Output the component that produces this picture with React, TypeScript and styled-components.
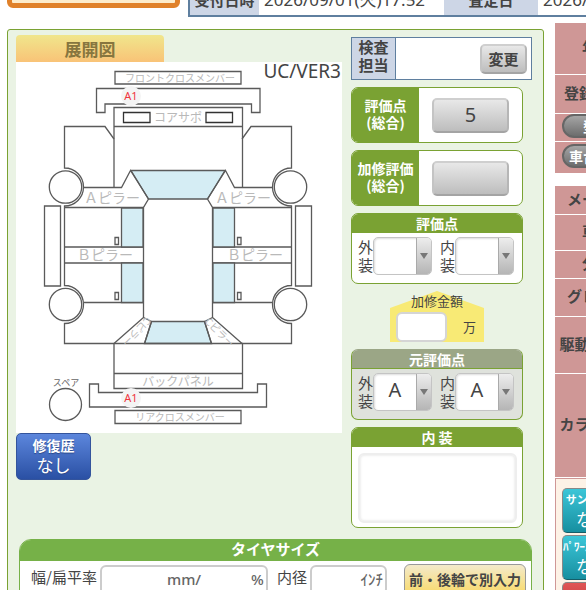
import React from 'react';
import styled, { createGlobalStyle, css } from 'styled-components';

const GREEN = '#7aa233';
const BLUE = '#5f7f9f';
const INK = '#444444';

const GlobalStyle = createGlobalStyle`
  * { box-sizing: border-box; }
  body {
    margin: 0;
    background: #fff;
    color: ${INK};
    font-family: 'Noto Sans CJK JP', 'Noto Sans', sans-serif;
    font-size: 15px;
    line-height: 18px;
  }
  button, input, select, textarea { font: inherit; color: inherit; margin: 0; }
`;

const Page = styled.div`
  height: 100vh;
  overflow: hidden;
  display: flex;
  flex-direction: column;
`;

/* ---------- header strip ---------- */

const TopBar = styled.header`
  flex: none;
  display: flex;
  align-items: flex-end;
  gap: 8px;
  height: 17px;
  padding-left: 7px;
  overflow: hidden;
`;

const Notice = styled.div`
  flex: none;
  width: 173px;
  height: 32px;
  margin-bottom: 9px;
  border: 5px solid #e0812a;
  border-radius: 6px;
  background: #fdeccb;
`;

const Dates = styled.dl`
  flex: 1;
  min-width: 0;
  display: flex;
  margin: 0;
  height: 36px;
  border: 2px solid ${BLUE};
  border-right: 0;
  white-space: nowrap;
  line-height: 34px;
`;

const DateLabel = styled.dt<{ $wide?: boolean }>`
  flex: 0 0 ${p => (p.$wide ? 94 : 69)}px;
  background: #cdd6e6;
  font-weight: 700;
  text-align: center;
`;

const DateValue = styled.dd<{ $grow?: boolean }>`
  flex: ${p => (p.$grow ? '1 0 auto' : '0 0 185px')};
  margin: 0;
  padding-left: 5px;
  font-family: 'Noto Sans', 'Noto Sans CJK JP', sans-serif;
  font-size: 17px;
`;

/* ---------- page columns ---------- */

const Main = styled.main`
  flex: 1;
  display: flex;
  align-items: flex-start;
  gap: 11px;
  padding: 6px 0 0 7px;
`;

const Sheet = styled.section`
  flex: 1;
  margin-top: 6px;
  padding: 5px 8px 12px;
  border: 1px solid ${GREEN};
  border-radius: 3px;
  background: #eaf3e4;
`;

const SheetTop = styled.div`
  display: flex;
  align-items: flex-start;
  gap: 9px;
`;

const DiagramColumn = styled.div`
  flex: 0 0 326px;
`;

const Tab = styled.h2`
  width: 148px;
  margin: 0;
  border-radius: 4px 4px 0 0;
  background: linear-gradient(#f0e68c, #f9c377);
  color: #87763f;
  font-size: 17px;
  line-height: 27px;
  text-align: center;
`;

const Diagram = styled.svg`
  display: block;
  width: 100%;
  background: #fff;
`;

const RepairButton = styled.button`
  display: block;
  width: 75px;
  height: 47px;
  padding: 0 0 4px;
  border: 1px solid #34549c;
  border-radius: 5px;
  background: linear-gradient(#5c86dc, #2a50a4);
  color: #fff;
  font-size: 17px;
  line-height: 19px;
  text-shadow: 0 1px 1px #2a4788;
`;

const Strong = styled.strong`
  display: block;
  font-size: 14px;
`;

const ScoreColumn = styled.div`
  flex: 1;
  display: flex;
  flex-direction: column;
  gap: 7px;
  padding-top: 2px;
`;

const Inspector = styled.div`
  display: flex;
  align-items: center;
  height: 43px;
  margin-right: 3px;
  border: 1px solid ${BLUE};
  background: #fff;
`;

const InspectorLabel = styled.div`
  align-self: stretch;
  width: 44px;
  border-right: 1px solid ${BLUE};
  background: #cdd6e6;
  font-weight: 700;
  text-align: center;
`;

const GreyButton = styled.button<{ $w: number; $h: number; $bold?: boolean }>`
  width: ${p => p.$w}px;
  height: ${p => p.$h}px;
  padding: 0;
  border: 2px solid;
  border-color: #cfcfcf #b6b6b6 #a4a4a4 #c4c4c4;
  border-radius: 5px;
  background: linear-gradient(#e8e8e8, #bdbdbd);
  font-size: ${p => (p.$bold ? 15 : 20)}px;
  font-weight: ${p => (p.$bold ? 700 : 400)};
  font-family: 'Noto Sans', 'Noto Sans CJK JP', sans-serif;
`;

const PushRight = styled.div`
  display: flex;
  margin-left: auto;
  padding-right: 4px;
`;

const TotalCard = styled.div`
  display: flex;
  width: 172px;
  height: 56px;
  border: 1px solid ${GREEN};
  border-radius: 7px;
  background: #fff;
  overflow: hidden;
`;

const TotalLabel = styled.div`
  flex: 0 0 67px;
  padding-top: 9px;
  background: ${GREEN};
  color: #fff;
  font-size: 14px;
  font-weight: 700;
  line-height: 17px;
  text-align: center;
`;

const TotalBody = styled.div`
  flex: 1;
  display: flex;
  align-items: center;
  justify-content: center;
`;

const Card = styled.section<{ $muted?: boolean }>`
  width: 172px;
  border: 1px solid ${GREEN};
  border-radius: 7px;
  background: ${p => (p.$muted ? '#dfe2dc' : '#fff')};
  overflow: hidden;
  ${p => p.$muted && css`border-top-color: #9ba686;`}
`;

const CardTitle = styled.h3<{ $muted?: boolean }>`
  margin: 0;
  border-bottom: 1px solid ${GREEN};
  background: ${p => (p.$muted ? '#9ba686' : GREEN)};
  color: #fff;
  font-size: 14px;
  line-height: 18px;
  text-align: center;
`;

const Pair = styled.div`
  display: flex;
  gap: 8px;
  padding: 4px 6px 8px;
`;

const SelectLabel = styled.label`
  display: flex;
  align-items: center;
  font-size: 15px;
  line-height: 18px;
`;

const Narrow = styled.span`
  width: 15px;
`;

const SelectBox = styled.span`
  display: grid;
  grid-template-columns: 1fr 15px;
  width: 59px;
  height: 38px;
  border: 1px solid #c4c4c4;
  border-radius: 5px;
  background: #fff;
  overflow: hidden;
  box-shadow: inset 1px 1px 2px #ddd;
`;

const Select = styled.select`
  grid-area: 1 / 1 / 2 / 3;
  width: 100%;
  padding: 0 15px 4px 0;
  border: 0;
  background: transparent;
  appearance: none;
  text-align: center;
  text-align-last: center;
  font-family: 'Noto Sans', sans-serif;
  font-size: 20px;
`;

const ArrowCap = styled.span`
  grid-area: 1 / 2 / 2 / 3;
  display: flex;
  align-items: center;
  justify-content: center;
  border-left: 1px solid #aaa;
  background: linear-gradient(#ededed, #b5b5b5);
  pointer-events: none;
`;

const CostArea = styled.div`
  display: grid;
  width: 172px;
`;

const CostTitle = styled.span`
  grid-area: 1 / 1;
  z-index: 1;
  text-align: center;
  font-size: 13px;
  line-height: 20px;
`;

const Cost = styled.label`
  grid-area: 1 / 1;
  display: flex;
  align-items: center;
  gap: 16px;
  width: 94px;
  height: 51px;
  margin-left: 39px;
  padding: 20px 6px 0;
  background: #f8ea75;
  clip-path: polygon(0 17px, 47px 0, 100% 17px, 100% 100%, 0 100%);
  font-size: 13px;
`;

const Field = styled.input`
  width: 51px;
  height: 30px;
  border: 2px solid #d5d5d5;
  border-radius: 6px;
  background: #fff;
`;

const Memo = styled.textarea`
  display: block;
  width: 159px;
  height: 70px;
  margin: 6px 6px 4px;
  border: 2px solid #eee;
  border-radius: 6px;
  background: #fff;
  box-shadow: inset 0 0 3px #ddd;
  resize: none;
`;

/* ---------- tyres ---------- */

const Tires = styled.section`
  margin: 11px 3px 0;
  border: 1px solid #76b148;
  border-radius: 12px 12px 0 0;
  background: #fff;
  overflow: hidden;
`;

const TiresTitle = styled.h3`
  margin: 0;
  padding-bottom: 3px;
  background: #76b148;
  color: #fff;
  font-size: 15px;
  line-height: 18px;
  text-align: center;
`;

const TireRow = styled.div`
  display: flex;
  align-items: flex-start;
  padding: 3px 5px 12px 11px;
  white-space: nowrap;
`;

const TireLabel = styled.label`
  padding: 4px 3px 0 0;
`;

const UnitBox = styled.div<{ $w: number }>`
  display: grid;
  width: ${p => p.$w}px;
  height: 30px;
  margin: 1px 9px 0 0;
  border: 2px solid #ccc;
  border-radius: 6px;
  background: #fff;
`;

const UnitInput = styled.input`
  grid-area: 1 / 1;
  width: 100%;
  min-width: 0;
  border: 0;
  background: transparent;
`;

const Units = styled.span`
  grid-area: 1 / 1;
  display: flex;
  align-items: center;
  justify-content: flex-end;
  gap: 50px;
  padding: 0 2px 2px 0;
  color: #666;
  font-family: 'Noto Sans', 'Noto Sans CJK JP', sans-serif;
  font-size: 15px;
  font-weight: 500;
  pointer-events: none;
`;

const SplitButton = styled.button`
  width: 122px;
  height: 34px;
  margin-left: auto;
  padding: 0 0 4px;
  border: 1px solid #999;
  border-radius: 6px;
  background: linear-gradient(#f3eacb, #f9d860);
  font-size: 14px;
  font-weight: 700;
  white-space: nowrap;
`;

/* ---------- attribute column ---------- */

const Side = styled.aside`
  flex: 0 0 31px;
  overflow: hidden;
`;

const Attributes = styled.div`
  display: flex;
  flex-direction: column;
  gap: 1px;
  width: 84px;
  margin-bottom: 13px;
`;

const Models = styled(Attributes)`
  margin-bottom: 1px;
`;

const Attribute = styled.div<{ $h: number }>`
  display: flex;
  align-items: center;
  justify-content: center;
  height: ${p => p.$h}px;
  padding-bottom: 3px;
  background: #cf9796;
  font-weight: 700;
  white-space: nowrap;
`;

const Pill = styled.button`
  width: 70px;
  height: 24px;
  padding: 0;
  border: 2px solid #666;
  border-radius: 12px;
  background: linear-gradient(#a5a5a5, #6d6d6d);
  color: #fff;
  font-size: 14px;
  font-weight: 700;
  line-height: 18px;
  white-space: nowrap;
`;

const Equipment = styled.div`
  display: flex;
  flex-direction: column;
  gap: 2px;
  width: 160px;
  padding: 9px 6px;
  border: 1px solid #cf9796;
  background: #fdf2e6;
`;

const EquipButton = styled.button<{ $red?: boolean }>`
  width: 62px;
  height: 45px;
  padding: 0 0 4px;
  border: 1px solid #888;
  border-bottom-color: ${p => (p.$red ? '#811' : '#155d68')};
  border-radius: 5px;
  background: ${p => (p.$red ? 'linear-gradient(#e05555, #b02a2a)' : 'linear-gradient(#3cc6d8, #178fa0)')};
  color: ${p => (p.$red ? '#ffe14a' : '#fff')};
  font-size: 17px;
  line-height: 19px;
  white-space: nowrap;
`;

const Small = styled.strong`
  display: block;
  font-size: 11px;
`;

/* ---------- vehicle drawing ---------- */

const Caption = styled.text`
  fill: #b9b9b9;
  font-size: 10px;
  text-anchor: middle;
`;

const PillarCaption = styled(Caption)`
  font-size: 14px;
`;

const CoreCaption = styled(Caption)`
  font-size: 12px;
`;

const SpareCaption = styled(Caption)`
  fill: #666;
  font-size: 9px;
`;

const Version = styled.text`
  fill: #444;
  font-family: 'Noto Sans', sans-serif;
  font-size: 19px;
  text-anchor: end;
`;

const Damage = styled.text`
  fill: #f0353d;
  font-family: 'Noto Sans', sans-serif;
  font-size: 11px;
  text-anchor: middle;
`;

/* One flank of the car; the other is its mirror about x = 178. */
const Flank = () => (
  <g>
    <path d="M114 139 105 126.500H64.500V168A19 19 0 0 1 64.500 206V285.500A19 19 0 0 1 64.500 323.500V343.500H114" />
    <path d="M83.500 187.500H121.500L130.500 170.500 148.500 199 143.500 207.500V317.500L114 343.500" />
    <path d="M64.500 207.500H143.500M64.500 247H143.500M64.500 263H143.500M83.500 302.500H143.500" />
    <path d="M143.500 317.500 151.500 321.500 144.500 343.500" />
    <path d="M121.500 208H143V247H121.500ZM121.500 263H143V302.500H121.500Z" fill="#d5edf4" />
    <path d="M44.500 206H60.500V286H44.500ZM115 237.500H118.500V244.500H115ZM115 292.500H118.500V299.500H115Z" />
    <circle cx="65.500" cy="187" r="16.200" fill="#fff" />
    <circle cx="65.500" cy="304.500" r="16.200" fill="#fff" />
  </g>
);

const CarDiagram = () => (
  <Diagram viewBox="16 62 326 371" role="img" aria-label="展開図">
    <g fill="none" stroke="#5a5a5a" strokeWidth="1.300">
      <path d="M115 71.500H241V84H115ZM115 410.500H241V423.500H115Z" />
      <path d="M96.500 88.500H260V112.500H251.500V104H105V112.500H96.500Z" />
      <path d="M89.500 384H98.500V392.500H257.500V384H266.500V407H89.500Z" />
      <path d="M114 187.500V107.500H242.500V187.500M114 126.500H242.500" />
      <path d="M123.500 112.500H150V122.500H123.500ZM206 112.500H232.500V122.500H206Z" stroke="#333" />
      <path d="M131 170.500H225L207.500 199H148.500Z" fill="#d5edf4" />
      <path d="M151.500 321.500H204.500L211.500 343.500H144.500Z" fill="#d5edf4" />
      <path d="M114 343.500V388.500H242.500V343.500M114 343.500H242.500M114 373.500H242.500" />
      <Flank />
      <g transform="translate(356 0) scale(-1 1)">
        <Flank />
      </g>
      <circle cx="65.500" cy="404.500" r="16" />
    </g>
    <Caption x="180" y="82">フロントクロスメンバー</Caption>
    <CoreCaption x="178" y="122">コアサポ</CoreCaption>
    <PillarCaption x="112" y="203">Ａピラー</PillarCaption>
    <PillarCaption x="243" y="203">Ａピラー</PillarCaption>
    <PillarCaption x="105" y="260">Ｂピラー</PillarCaption>
    <PillarCaption x="255" y="260">Ｂピラー</PillarCaption>
    <Caption transform="translate(134 329) rotate(135)">Cピラー</Caption>
    <Caption transform="translate(217 335) rotate(45)">Cピラー</Caption>
    <CoreCaption x="178" y="386">バックパネル</CoreCaption>
    <Caption x="180" y="421">リアクロスメンバー</Caption>
    <SpareCaption x="66" y="386">スペア</SpareCaption>
    <circle cx="131" cy="96" r="10" fill="#f4f4f4" />
    <circle cx="131" cy="398" r="10" fill="#f4f4f4" />
    <Damage x="131" y="100">A1</Damage>
    <Damage x="131" y="402">A1</Damage>
    <Version x="341" y="78">UC/VER3</Version>
  </Diagram>
);

const Total = ({ label, value }: { label: string; value: string }) => (
  <TotalCard>
    <TotalLabel>{label}<br />(総合)</TotalLabel>
    <TotalBody>
      <GreyButton $w={77} $h={35} aria-label={label}>{value}</GreyButton>
    </TotalBody>
  </TotalCard>
);

const Grade = ({ label, value }: { label: string; value: string }) => (
  <SelectLabel>
    <Narrow>{label[0]}<br />{label[1]}</Narrow>
    <SelectBox>
      <ArrowCap>
        <svg width="8" height="6" viewBox="0 0 8 6"><path d="M0 0H8L4 6Z" fill="#777" /></svg>
      </ArrowCap>
      <Select defaultValue={value}>
        <option value={value}>{value}</option>
      </Select>
    </SelectBox>
  </SelectLabel>
);

const GradeCard = ({ title, value, muted }: { title: string; value: string; muted?: boolean }) => (
  <Card $muted={muted}>
    <CardTitle $muted={muted}>{title}</CardTitle>
    <Pair>
      <Grade label="外装" value={value} />
      <Grade label="内装" value={value} />
    </Pair>
  </Card>
);

const attributes = [
  { label: 'メーカー', height: 28 },
  { label: '車名', height: 35 },
  { label: '分類', height: 27 },
  { label: 'グレード', height: 37 },
  { label: '駆動・燃料', height: 56 },
  { label: 'カラー番号', height: 103 },
];

export default function App() {
  return (
    <Page>
      <GlobalStyle />
      <TopBar>
        <Notice />
        <Dates>
          <DateLabel>受付日時</DateLabel>
          <DateValue>2026/09/01(火)17:52</DateValue>
          <DateLabel $wide>査定日</DateLabel>
          <DateValue $grow>2026/</DateValue>
        </Dates>
      </TopBar>
      <Main>
        <Sheet>
          <SheetTop>
            <DiagramColumn>
              <Tab>展開図</Tab>
              <CarDiagram />
              <RepairButton><Strong>修復歴</Strong>なし</RepairButton>
            </DiagramColumn>
            <ScoreColumn>
              <Inspector>
                <InspectorLabel>検査<br />担当</InspectorLabel>
                <PushRight><GreyButton $w={47} $h={30} $bold>変更</GreyButton></PushRight>
              </Inspector>
              <Total label="評価点" value="5" />
              <Total label="加修評価" value="" />
              <GradeCard title="評価点" value="" />
              <CostArea>
                <CostTitle>加修金額</CostTitle>
                <Cost><Field aria-label="加修金額" />万</Cost>
              </CostArea>
              <GradeCard title="元評価点" value="A" muted />
              <Card>
                <CardTitle>内 装</CardTitle>
                <Memo aria-label="内装" />
              </Card>
            </ScoreColumn>
          </SheetTop>
          <Tires>
            <TiresTitle>タイヤサイズ</TiresTitle>
            <TireRow>
              <TireLabel htmlFor="width">幅/扁平率</TireLabel>
              <UnitBox $w={168}>
                <UnitInput id="width" />
                <Units><span>mm/</span><span>%</span></Units>
              </UnitBox>
              <TireLabel htmlFor="rim">内径</TireLabel>
              <UnitBox $w={77}>
                <UnitInput id="rim" />
                <Units>ｲﾝﾁ</Units>
              </UnitBox>
              <SplitButton>前・後輪で別入力</SplitButton>
            </TireRow>
          </Tires>
        </Sheet>
        <Side>
          <Attributes>
            <Attribute $h={51}>年式</Attribute>
            <Attribute $h={38}>登録年/月</Attribute>
            <Attribute $h={27}><Pill>型式</Pill></Attribute>
            <Attribute $h={31}><Pill>車台番号</Pill></Attribute>
          </Attributes>
          <Models>
            {attributes.map(a => (
              <Attribute key={a.label} $h={a.height}>{a.label}</Attribute>
            ))}
          </Models>
          <Equipment>
            <EquipButton><Small>サンルーフ</Small>なし</EquipButton>
            <EquipButton><Small>ﾊﾟﾜｰｽﾃｱﾘﾝｸﾞ</Small>なし</EquipButton>
            <EquipButton $red><Small>本革</Small>なし</EquipButton>
          </Equipment>
        </Side>
      </Main>
    </Page>
  );
}
